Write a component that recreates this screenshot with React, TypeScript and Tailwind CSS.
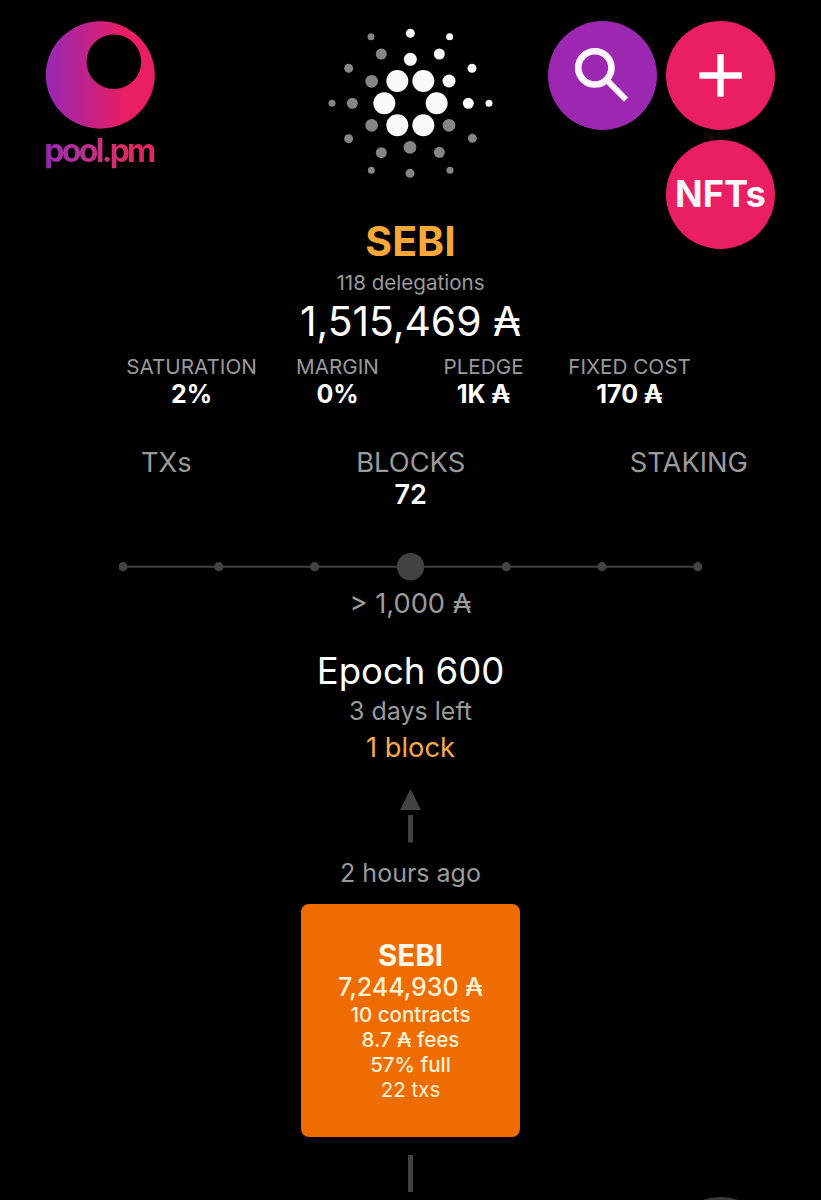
const stats = [
  { label: 'SATURATION', value: '2%' },
  { label: 'MARGIN', value: '0%' },
  { label: 'PLEDGE', value: '1K ₳' },
  { label: 'FIXED COST', value: '170 ₳' },
];

const brightDots = [
  [232, 198, 33], [310, 198, 33], [193, 265, 33], [350, 265, 33], [232, 331, 33], [310, 331, 33],
  [271, 133, 19.5], [387, 198, 19.5], [358, 117, 16.5], [445, 265, 16.5],
  [271, 55, 13.5], [456, 160, 13.5], [389, 65, 10.5], [507, 265, 10.5],
];

const dimDots = [
  [155, 199, 19], [155, 331, 19], [270, 397, 19], [387, 331, 19],
  [184, 117, 16.5], [97, 265, 16.5], [184, 413, 16.5], [358, 412, 16.5],
  [86, 160, 13.5], [86, 371, 13.5], [270, 475, 13.5], [457, 370, 13.5],
  [153, 65, 10.5], [36, 265, 10.5], [154, 466, 10.5], [390, 466, 10.5],
];

function Logo() {
  return (
    <div className="flex w-[110px] flex-col items-center pt-[21px]">
      <svg className="h-[108px] w-[110px]" viewBox="0 0 110 108">
        <defs>
          <linearGradient id="brand">
            <stop offset="0.05" stopColor="#9c27b0" />
            <stop offset="0.72" stopColor="#e91e63" />
          </linearGradient>
        </defs>
        <ellipse cx="55.3" cy="54" rx="54.5" ry="53.7" fill="url(#brand)" />
        <circle cx="68.9" cy="40.7" r="27.3" fill="#000" />
      </svg>
      <div className="-mr-[7px] -ml-[9px] mt-[2px] whitespace-nowrap bg-linear-to-r from-[#9c27b0] from-10% to-[#e0285e] to-75% bg-clip-text px-2 text-[32px] leading-[40px] font-bold tracking-[-2.7px] text-transparent">
        pool.pm
      </div>
    </div>
  );
}

function CardanoMark() {
  return (
    <svg className="mt-[15px] h-[175px] w-[180px]" viewBox="0 0 540 525">
      {brightDots.map(([x, y, r]) => (
        <circle key={`${x}-${y}`} cx={x} cy={y} r={r} fill="#fafafa" />
      ))}
      {dimDots.map(([x, y, r]) => (
        <circle key={`${x}-${y}`} cx={x} cy={y} r={r} fill="#858585" />
      ))}
    </svg>
  );
}

function Actions() {
  return (
    <div className="grid grid-cols-[109px_109px] content-start gap-x-[9.5px] gap-y-[10px] pt-[21px]">
      <button className="size-[109px] rounded-full bg-[#9c27b0]">
        <svg viewBox="0 0 328 328" fill="none" stroke="#fdf7fd">
          <circle cx="141" cy="141" r="50" strokeWidth="20" />
          <path d="M176 170 L189 178 L240 230 L229 242 L178 191 L170 176 Z" fill="#fdf7fd" strokeWidth="2" />
        </svg>
      </button>
      <button className="size-[109px] rounded-full bg-[#e91e63]">
        <svg viewBox="0 0 328 328" fill="none" stroke="#fff" strokeWidth="19">
          <path d="M164 100 V228 M100 164 H228" />
        </svg>
      </button>
      <button className="col-start-2 flex size-[109px] items-center justify-center rounded-full bg-[#e91e63] text-[36.3px] font-bold text-[#fff8fb]">
        NFTs
      </button>
    </div>
  );
}

function Slider() {
  return (
    <div className="mx-auto mt-[41px] h-[28px] w-[584px]">
      <svg className="h-full w-full" viewBox="0 0 584 28" fill="#424242">
        <rect x="4" y="12.7" width="576" height="2" />
        {[4, 99.8, 195.6, 387.2, 483, 578.8].map((x) => (
          <circle key={x} cx={x} cy="13.7" r="4.6" />
        ))}
        <circle cx="291.5" cy="13.7" r="13.7" />
      </svg>
    </div>
  );
}

export default function App() {
  return (
    <div className="relative h-[1200px] w-[821px] overflow-hidden bg-black font-['Inter','Noto_Sans',sans-serif] text-[#9a9a9a]">
      <header className="flex h-[217px] pl-[45px]">
        <Logo />
        <div className="ml-[165px]"><CardanoMark /></div>
        <div className="ml-[47.5px]"><Actions /></div>
      </header>
      <main className="flex flex-col text-center whitespace-nowrap">
        <h1 className="h-[48px] text-[41px] leading-[48px] font-bold text-[#f9a738]">SEBI</h1>
        <div className="h-[34px] pt-px text-[20.6px] leading-[34px]">118 delegations</div>
        <div className="h-[44px] text-[40.8px] leading-[45px] text-white">1,515,469 ₳</div>
        <div className="mx-auto mt-[11px] grid w-[584px] grid-cols-4">
          {stats.map((s) => (
            <div key={s.label}>
              <div className="text-[20.7px] leading-[25px]">{s.label}</div>
              <div className="mt-px text-[25px] leading-[29px] font-bold text-white">{s.value}</div>
            </div>
          ))}
        </div>
        <nav className="mt-[39px] flex h-[64px] justify-between pr-[73px] pl-[141px] text-[27.3px] leading-[30px]">
          <div>TXs</div>
          <div>
            BLOCKS
            <div className="text-[27px] leading-[34px] font-semibold text-white">72</div>
          </div>
          <div>STAKING</div>
        </nav>
        <Slider />
        <div className="mt-[8px] text-[27.3px] leading-[30px]">&gt; 1,000 ₳</div>
        <h2 className="mt-[31px] text-[36.5px] leading-[42px] text-white">Epoch 600</h2>
        <div className="mt-[4px] text-[25px] leading-[30px]">3 days left</div>
        <div className="mt-[7px] text-[27.3px] leading-[30px] text-[#f9a84a]">1 block</div>
        <svg className="mx-auto mt-[26px] h-[54px] w-[22px]" viewBox="0.5 0 22 54" fill="#424242">
          <path d="M11 0 L21.5 21 H0.5 Z M8.5 26 H13.5 V53.5 H8.5 Z" />
        </svg>
        <div className="mt-[15px] text-[25px] leading-[31px]">2 hours ago</div>
        <section className="mx-auto mt-[15px] h-[233px] w-[219px] rounded-[8px] bg-[#ef6c00] pt-[33px] text-[20.5px] leading-[25px] font-medium text-[#fff3d6]">
          <div className="text-[29.5px] leading-[36px] font-bold text-[#fff8e6]">SEBI</div>
          <div className="text-[25px] leading-[29px]">7,244,930 ₳</div>
          <div>10 contracts</div>
          <div>8.7 ₳ fees</div>
          <div>57% full</div>
          <div className="font-normal">22 txs</div>
        </section>
        <div className="mx-auto mt-[18px] h-[37px] w-[5px] bg-[#424242]" />
      </main>
      <div className="absolute top-[1196.5px] left-[666px] size-[109px] rounded-full bg-[#3a3a3a]" />
    </div>
  );
}
